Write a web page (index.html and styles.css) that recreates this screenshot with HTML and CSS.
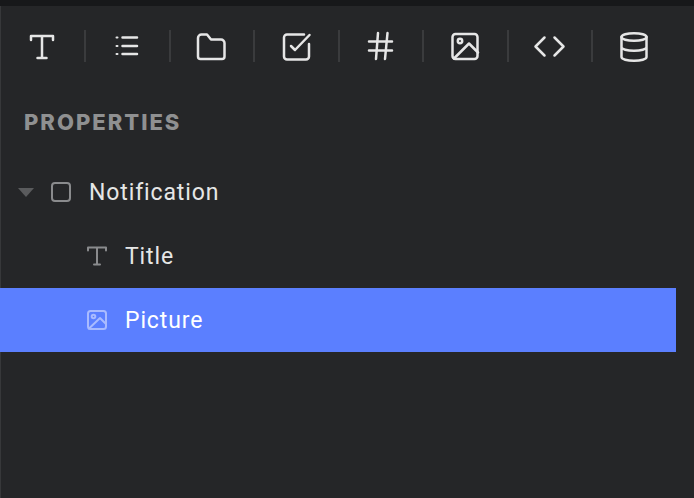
FILE: index.html
```html
<!DOCTYPE html>
<html lang="en">
<head>
    <meta charset="UTF-8">
    <title>Properties</title>
    <link rel="stylesheet" href="styles.css">
</head>
<body>
    <div class="topbar"></div>
    <div class="panel">
        <div class="toolbar">
            <svg class="tool" viewBox="0 0 24 24"><path d="M1 6V2h22V6M12 2v22M7.500 24h9"/></svg>
            <span class="sep"></span>
            <svg class="tool" viewBox="0 0 24 24"><path d="M7.500 3.500h14.500M7.500 12h14.500M7.500 20h14.500"/><path class="dots" d="M1.500 3.500h1M1.500 12h1M1.500 20h1"/></svg>
            <span class="sep"></span>
            <svg class="tool wide" viewBox="0 0 28 28"><path d="M1 6a3.500 3.500 0 0 1 3.500-3.500h5.500l4 5h10a3.500 3.500 0 0 1 3.500 3.500v13.500a2.500 2.500 0 0 1-2.500 2.500H3.500A2.500 2.500 0 0 1 1 24.500z"/></svg>
            <span class="sep"></span>
            <svg class="tool wide" viewBox="0 0 28 28"><path d="M22 2.500H5A3 3 0 0 0 2 5.500v19a3 3 0 0 0 3 3h19a3 3 0 0 0 3-3V12"/><path d="M9 14l4 4L27.500 3"/></svg>
            <span class="sep"></span>
            <svg class="tool" viewBox="0 0 24 24"><path d="M1 7.600h23M1 16.600h23M10-1L8 25M19.500-1L17 25"/></svg>
            <span class="sep"></span>
            <svg class="tool wide" viewBox="0 0 28 28"><rect x="1.500" y="2" width="25" height="25" rx="3"/><circle cx="9" cy="9" r="2.200"/><path d="M3 26.500L18 11.500l9 9"/></svg>
            <span class="sep"></span>
            <svg class="tool" viewBox="0 0 24 24"><path d="M7.500 3.500L-1.500 12.500l9 9M17.500 3.500l9 9-9 9"/></svg>
            <span class="sep"></span>
            <svg class="tool wide" viewBox="0 0 28 28"><ellipse cx="14" cy="5" rx="12.500" ry="3.800"/><path d="M1.500 5v20c0 2.100 5.600 3.800 12.500 3.800s12.500-1.700 12.500-3.800V5M1.500 15c0 2.100 5.600 3.800 12.500 3.800s12.500-1.700 12.500-3.800"/></svg>
        </div>
        <h2 class="heading">PROPERTIES</h2>
        <ul class="tree">
            <li class="row">
                <span class="caret"></span>
                <svg class="icon frame" viewBox="0 0 20 20"><rect x="1" y="1" width="18" height="18" rx="3"/></svg>
                <span class="label">Notification</span>
            </li>
            <li class="row child">
                <svg class="icon" viewBox="0 0 20 20"><path d="M1 4.500V1.500h18v3M10 1.500v17M7 18.500h6"/></svg>
                <span class="label">Title</span>
            </li>
            <li class="row child selected">
                <svg class="icon" viewBox="0 0 20 20"><rect x="1" y="1" width="18" height="18" rx="2.500"/><circle cx="6.500" cy="6.500" r="1.800"/><path d="M2 18.500L13 8l6 6"/></svg>
                <span class="label">Picture</span>
            </li>
        </ul>
    </div>
</body>
</html>
```

FILE: styles.css
```css
html, body {
    height: 100%;
}

body {
    margin: 0;
    background-color: #252628;
    display: flex;
    flex-direction: column;
    overflow: hidden;
}

.topbar {
    height: 6px;
    background-color: #17181a;
    flex-shrink: 0;
}

.panel {
    flex: 1;
    border-left: 1px solid #37383a;
}

.toolbar {
    display: flex;
    align-items: center;
    height: 32px;
    padding: 24px 0 0 29px;
}

.tool {
    width: 24px;
    height: 24px;
    flex-shrink: 0;
    overflow: visible;
    fill: none;
    stroke: #e6e6e6;
    stroke-width: 2.5;
    stroke-linecap: round;
    stroke-linejoin: round;
}

.tool.wide {
    width: 28px;
    height: 28px;
    margin: 0 -2px;
}

.dots {
    stroke-width: 2;
}

.sep {
    width: 2px;
    height: 32px;
    flex-shrink: 0;
    margin: 0 28.570px 0 30px;
    background-color: #3a3b3d;
}

.heading {
    margin: 0;
    padding: 46px 0 0 23px;
    height: 27px;
    font-family: Inter, sans-serif;
    font-size: 22px;
    line-height: 29px;
    font-weight: 800;
    letter-spacing: 2px;
    color: #8f9091;
}

.tree {
    list-style: none;
    margin: 25px 18px 0 -1px;
    padding: 0;
}

.row {
    display: flex;
    align-items: center;
    height: 64px;
    font-family: Roboto, sans-serif;
    font-size: 23px;
    letter-spacing: 0.880px;
    color: #e6e6e6;
}

.child {
    padding-left: 87px;
}

.selected {
    background-color: #5b7fff;
    color: #fff;
}

.caret {
    width: 0;
    height: 0;
    margin-left: 18px;
    border-left: 8px solid transparent;
    border-right: 8px solid transparent;
    border-top: 9px solid #5a5b5d;
}

.icon {
    width: 20px;
    height: 20px;
    flex-shrink: 0;
    fill: none;
    stroke: #8a8b8d;
    stroke-width: 2;
    stroke-linecap: round;
    stroke-linejoin: round;
    margin-right: 18px;
}

.frame {
    margin-left: 17px;
    margin-right: 18px;
}

.selected .icon {
    stroke: #a9bbff;
}
```
